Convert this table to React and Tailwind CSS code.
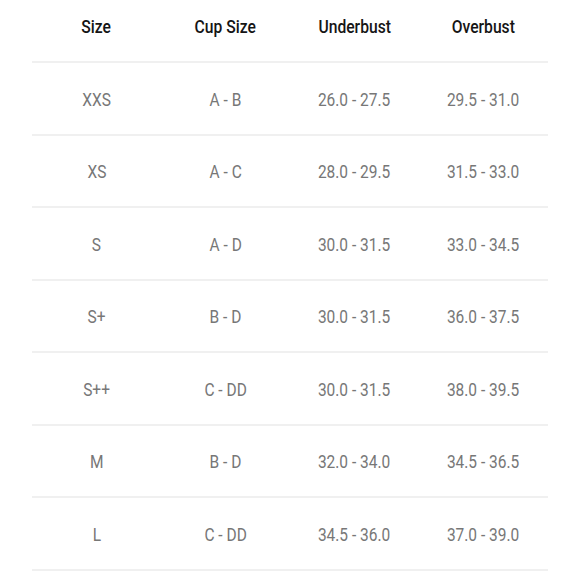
import React from 'react';

const rows = [
    ['XXS', 'A - B', '26.0 - 27.5', '29.5 - 31.0'],
    ['XS', 'A - C', '28.0 - 29.5', '31.5 - 33.0'],
    ['S', 'A - D', '30.0 - 31.5', '33.0 - 34.5'],
    ['S+', 'B - D', '30.0 - 31.5', '36.0 - 37.5'],
    ['S++', 'C - DD', '30.0 - 31.5', '38.0 - 39.5'],
    ['M', 'B - D', '32.0 - 34.0', '34.5 - 36.5'],
    ['L', 'C - DD', '34.5 - 36.0', '37.0 - 39.0'],
];

const headers = ['Size', 'Cup Size', 'Underbust', 'Overbust'];

function Cell({ children, head }) {
    return (
        <div className="flex justify-center">
            <span className={`inline-block whitespace-nowrap ${head ? 'scale-x-[0.87] font-medium text-[#151515] text-[18px]' : 'scale-x-[0.86] text-[#777777] text-[18px]'}`}>
                {children}
            </span>
        </div>
    );
}

export default function App() {
    return (
        <div className="w-[580px] h-[580px] bg-white px-[32px] overflow-hidden" style={{ fontFamily: 'Roboto, "Liberation Sans", sans-serif' }}>
            <div className="grid grid-cols-4 h-[63px] pt-[15px] leading-[24px] border-b-2 border-[#f0f0f0]">
                {headers.map((h) => (
                    <Cell key={h} head>{h}</Cell>
                ))}
            </div>
            {rows.map((r) => (
                <div key={r[0]} className="grid grid-cols-4 items-center h-[72.5px] pt-[3px] leading-[24px] border-b-2 border-[#f0f0f0]">
                    {r.map((c, i) => (
                        <Cell key={i}>{c}</Cell>
                    ))}
                </div>
            ))}
        </div>
    );
}
